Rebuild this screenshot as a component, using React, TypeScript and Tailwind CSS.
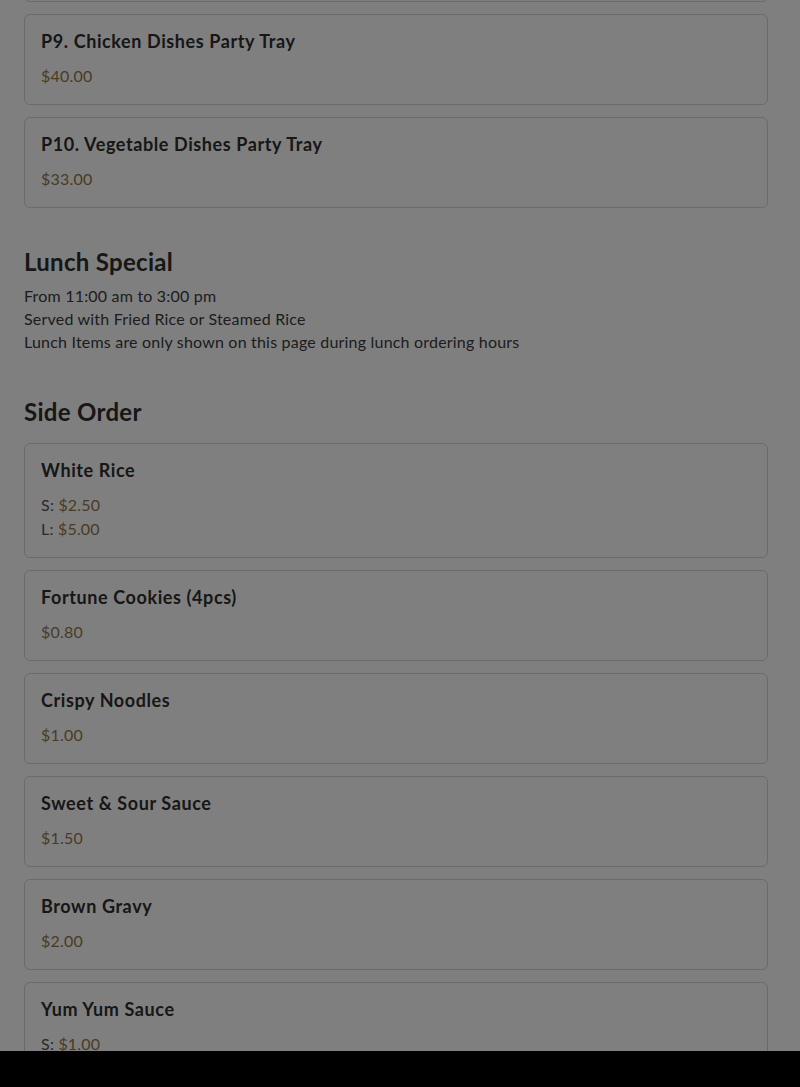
const partyTrays = [
  { name: 'P9. Chicken Dishes Party Tray', prices: [{ price: '$40.00' }] },
  { name: 'P10. Vegetable Dishes Party Tray', prices: [{ price: '$33.00' }] },
]

const sideOrders = [
  { name: 'White Rice', prices: [{ label: 'S:', price: '$2.50' }, { label: 'L:', price: '$5.00' }] },
  { name: 'Fortune Cookies (4pcs)', prices: [{ price: '$0.80' }] },
  { name: 'Crispy Noodles', prices: [{ price: '$1.00' }] },
  { name: 'Sweet & Sour Sauce', prices: [{ price: '$1.50' }] },
  { name: 'Brown Gravy', prices: [{ price: '$2.00' }] },
  { name: 'Yum Yum Sauce', prices: [{ label: 'S:', price: '$1.00' }] },
]

type Item = { name: string; prices: { label?: string; price: string }[] }

function MenuCard({ item }: { item: Item }) {
  return (
    <div className="rounded-md border border-[#d6d6d6] bg-white px-4 py-4">
      <div className="text-[18px] leading-[21px] font-bold tracking-[0.6px] text-[#2e2e2e]">{item.name}</div>
      <div className="mt-3">
        {item.prices.map((p, i) => (
          <div key={i} className="text-[16px] leading-[24px] tracking-[0.2px]">
            {p.label && <span className="text-[#555]">{p.label} </span>}
            <span className="text-[#96774a]">{p.price}</span>
          </div>
        ))}
      </div>
    </div>
  )
}

export default function App() {
  return (
    <div
      className="relative flex h-[1087px] flex-col overflow-hidden bg-white"
      style={{ fontFamily: 'Lato, "Noto Sans", sans-serif' }}
    >
      <main className="h-[1051px] overflow-hidden pl-6 pr-8">
        <div className="flex flex-col gap-3">
          {/* bottom of the previous tray, scrolled past */}
          <div className="-mt-[89px] h-[91px] rounded-md border border-[#d6d6d6] bg-white" />
          {partyTrays.map((item) => (
            <MenuCard key={item.name} item={item} />
          ))}
        </div>

        <section className="mt-[38px]">
          <h2 className="text-[24px] leading-[32px] font-bold tracking-[0.3px] text-[#2e2e2e]">Lunch Special</h2>
          <div className="mt-[6px] text-[16px] leading-[23px] tracking-[0.2px] text-[#3a3a3a]">
            <p>From 11:00 am to 3:00 pm</p>
            <p>Served with Fried Rice or Steamed Rice</p>
            <p>Lunch Items are only shown on this page during lunch ordering hours</p>
          </div>
        </section>

        <section className="mt-[43px]">
          <h2 className="text-[24px] leading-[32px] font-bold tracking-[0.3px] text-[#2e2e2e]">Side Order</h2>
          <div className="mt-[15px] flex flex-col gap-3">
            {sideOrders.map((item) => (
              <MenuCard key={item.name} item={item} />
            ))}
          </div>
        </section>
      </main>
      <div className="h-[36px] bg-black" />

      <div className="absolute inset-0 bg-black/50" />
    </div>
  )
}
